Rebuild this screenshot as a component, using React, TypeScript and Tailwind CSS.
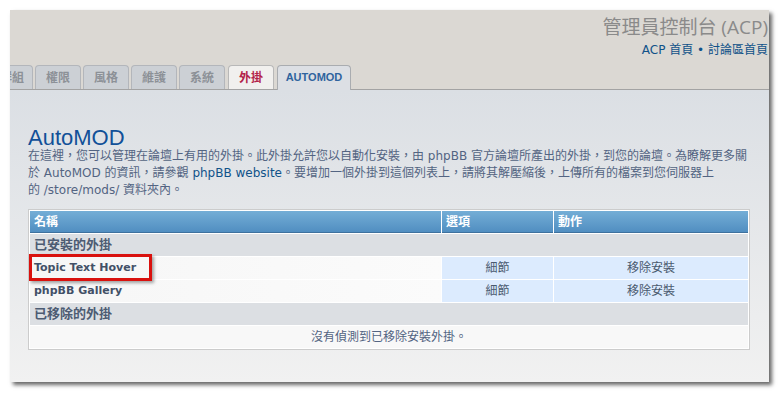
import React from "react";

const L = ({ children, link }: { children: React.ReactNode; link?: boolean }) => (
  <span className={link ? "text-[#105289]" : ""}>{children}</span>
);

const Tab = ({ label, active, extra }: { label: string; active?: boolean; extra?: string }) => (
  <div
    className={`h-[24px] w-[46px] rounded-t-[4px] border border-b-0 flex items-center justify-center text-[12px] font-bold ${
      active ? "bg-[#f1f0ee] text-[#b3234a] border-[#b8b8b8]" : "bg-[#ccd0d5] text-[#8c9197] border-[#b3b6bb]"
    } ${extra ?? ""}`}
  >
    {label}
  </div>
);

const th = "h-[22px] px-[4px] py-0 bg-gradient-to-b from-[#74aed6] to-[#4f8dc0] shadow-[inset_0_-1px_0_#3e719e]";
const td = "h-[22px] py-0";

export default function App() {
  return (
    <div className="w-[781px] h-[394px] bg-white pt-[10px] pl-[10px] font-['DejaVu_Sans','Noto_Sans_CJK_TC',sans-serif]">
      <div className="w-[759px] h-[372px] flex flex-col overflow-hidden shadow-[3px_3px_4px_rgba(0,0,0,0.6)]">
        {/* header */}
        <div className="h-[80px] shrink-0 bg-[#dbd8d3] border-b border-[#a3a3a3] flex flex-col">
          <div className="text-right pt-[5px] pr-[1px]">
            <div className="text-[19px] leading-[24px] text-[#8a8a8a] font-['Open_Sans','Noto_Sans_CJK_TC',sans-serif] whitespace-nowrap">
              管理員控制台 (ACP)
            </div>
            <div className="mt-[4px] text-[12px] leading-[15px] text-[#105289] whitespace-nowrap">
              ACP 首頁 • 討論區首頁
            </div>
          </div>
          <div className="mt-auto flex items-end ml-[-23px] gap-[2px]">
            <div className="h-[24px] w-[46px] rounded-t-[4px] border border-b-0 border-[#b3b6bb] bg-[#ccd0d5] text-[#8c9197] text-[12px] font-bold flex items-center justify-end pr-[8px]">
              群組
            </div>
            <Tab label="權限" />
            <Tab label="風格" />
            <Tab label="維護" />
            <Tab label="系統" />
            <Tab label="外掛" active extra="ml-[1px] w-[45px]" />
            <div className="ml-[1px] h-[25px] mb-[-1px] w-[74px] rounded-t-[4px] border border-b-0 border-[#a9acb0] bg-[#dcdfe4] text-[#2f649e] text-[11px] font-bold font-['Liberation_Sans',sans-serif] flex items-center justify-center pb-[1px]">
              AUTOMOD
            </div>
          </div>
        </div>

        {/* content */}
        <div className="flex-1 bg-gradient-to-b from-[#dbdfe4] to-[#f1f1f1] pl-[18px] pt-[36px]">
          <h1 className="text-[22px] leading-[24px] text-[#115098] font-['Liberation_Sans',sans-serif]">AutoMOD</h1>
          <p className="-mt-[2px] text-[12px] leading-[17px] text-[#536482] whitespace-nowrap">
            <span className="block">
              在這裡，您可以管理在論壇上有用的外掛。此外掛允許您以自動化安裝，由 <L>phpBB</L> 官方論壇所產出的外掛，到您的論壇。為瞭解更多關
            </span>
            <span className="block">
              於 <L>AutoMOD</L> 的資訊，請參觀 <L link>phpBB website</L>。要增加一個外掛到這個列表上，請將其解壓縮後，上傳所有的檔案到您伺服器上
            </span>
            <span className="block">
              的 <L>/store/mods/</L> 資料夾內。
            </span>
          </p>

          <table className="mt-[10px] w-[722px] border border-[#cccccc] border-separate border-spacing-[1px] bg-white text-[12px] leading-[16px]">
            <thead>
              <tr className="text-white font-bold text-left">
                <th className={`${th} w-[411px]`}>名稱</th>
                <th className={`${th} w-[111px]`}>選項</th>
                <th className={th}>動作</th>
              </tr>
            </thead>
            <tbody>
              <tr>
                <td colSpan={3} className={`${td} px-[4px] bg-[#dcdfe3] text-[13px] font-bold text-[#4d5c73]`}>
                  已安裝的外掛
                </td>
              </tr>
              <tr>
                <td className={`${td} relative px-[4px] bg-gradient-to-r from-[#f6f6f6] to-[#fbfbfb] text-[11px] font-bold text-[#425067]`}>
                  Topic Text Hover
                  <span className="absolute left-[-1px] top-[-3px] w-[123px] h-[27px] border-[3px] border-[#d9110e] shadow-[2px_2px_3px_rgba(0,0,0,0.35)]" />
                </td>
                <td className={`${td} bg-[#dcebfe] text-center text-[#4a5a6f]`}>細節</td>
                <td className={`${td} bg-[#dcebfe] text-center text-[#4a5a6f]`}>移除安裝</td>
              </tr>
              <tr>
                <td className={`${td} px-[4px] bg-gradient-to-r from-[#f6f6f6] to-[#fbfbfb] text-[11px] font-bold text-[#425067]`}>
                  phpBB Gallery
                </td>
                <td className={`${td} bg-[#dcebfe] text-center text-[#4a5a6f]`}>細節</td>
                <td className={`${td} bg-[#dcebfe] text-center text-[#4a5a6f]`}>移除安裝</td>
              </tr>
              <tr>
                <td colSpan={3} className={`${td} px-[4px] bg-[#dcdfe3] text-[13px] font-bold text-[#4d5c73]`}>
                  已移除的外掛
                </td>
              </tr>
              <tr>
                <td colSpan={3} className={`${td} px-[4px] bg-[#f8f8f8] text-center text-[#536482]`}>
                  沒有偵測到已移除安裝外掛。
                </td>
              </tr>
            </tbody>
          </table>
        </div>
      </div>
    </div>
  );
}
